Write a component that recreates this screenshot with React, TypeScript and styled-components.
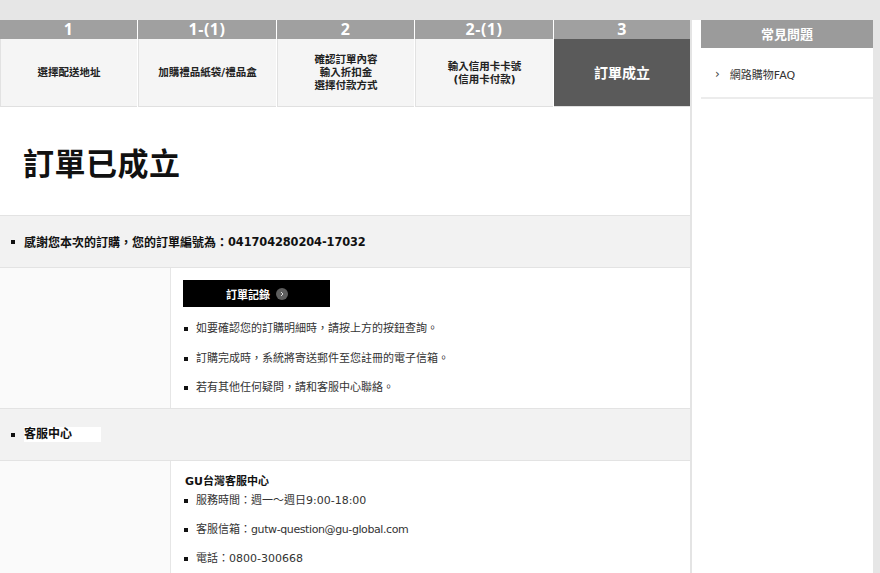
import React from "react";
import styled, { createGlobalStyle } from "styled-components";

const GlobalStyle = createGlobalStyle`
    html, body {
        margin: 0;
        padding: 0;
        background: #e6e6e6;
    }
    body {
        font-family: "DejaVu Sans", "Noto Sans CJK TC", sans-serif;
        color: #333;
        font-size: 11px;
    }
    * {
        box-sizing: border-box;
    }
`;

const steps = [
    { no: "1", label: ["選擇配送地址"] },
    { no: "1-(1)", label: ["加購禮品紙袋/禮品盒"] },
    { no: "2", label: ["確認訂單內容", "輸入折扣金", "選擇付款方式"] },
    { no: "2-(1)", label: ["輸入信用卡卡號", "(信用卡付款)"] },
    { no: "3", label: ["訂單成立"], active: true },
];

const Page = styled.div`
    width: 880px;
    height: 573px;
    padding: 20px 7px 0 0;
    overflow: hidden;
`;

const Sheet = styled.div`
    display: flex;
    width: 873px;
    min-height: 553px;
    background: #fff;
`;

const Main = styled.main`
    width: 692px;
    border-right: 2px solid #e4e4e4;
    flex-shrink: 0;
`;

const StepBar = styled.ol`
    display: grid;
    grid-template-columns: 137px 139px 138px 139px 137px;
    margin: 0;
    padding: 0;
    list-style: none;
`;

const Step = styled.li`
    display: flex;
    flex-direction: column;
    & + & {
        border-left: 1px solid #fff;
    }
`;

const StepNo = styled.div`
    height: 19px;
    line-height: 19px;
    background: #a0a0a0;
    color: #fff;
    text-align: center;
    font-family: "Open Sans", "Noto Sans CJK TC", sans-serif;
    font-weight: 700;
    font-size: 16px;
    letter-spacing: 0.5px;
`;

const StepLabel = styled.div<{ $active?: boolean }>`
    height: 68px;
    display: flex;
    flex-direction: column;
    align-items: center;
    justify-content: center;
    background: ${(p) => (p.$active ? "#5a5a5a" : "#f5f5f5")};
    color: ${(p) => (p.$active ? "#fff" : "#222")};
    font-size: ${(p) => (p.$active ? "14px" : "10.5px")};
    font-weight: 700;
    line-height: ${(p) => (p.$active ? "20px" : "13px")};
    border-bottom: 1px solid #e0e0e0;
    border-left: ${(p) => (p.$active ? "none" : "1px solid #e2e2e2")};

    span {
        display: block;
        text-align: left;
    }
`;

const Title = styled.h1`
    margin: 0;
    height: 108px;
    display: flex;
    align-items: center;
    padding: 0 0 0 23px;
    font-family: "Noto Sans CJK TC", sans-serif;
    font-size: 31px;
    font-weight: 700;
    color: #111;
    letter-spacing: 0.5px;
`;

const Band = styled.div`
    height: 53px;
    display: flex;
    align-items: center;
    padding-left: 11px;
    background: #f2f2f2;
    border-top: 1px solid #e3e3e3;
    border-bottom: 1px solid #e3e3e3;
    font-size: 12px;
    font-weight: 700;
    color: #111;

    &::before {
        content: "";
        width: 4px;
        height: 4px;
        margin-right: 9px;
        background: #111;
    }
`;

const OrderNo = styled.span`
    font-size: 11.4px;
    letter-spacing: -0.1px;
`;

const Highlight = styled.span`
    display: inline-block;
    width: 77px;
    line-height: 15px;
    background: #fff;
`;

const Row = styled.div`
    display: grid;
    grid-template-columns: 171px 1fr;
`;

const Aside = styled.div`
    background: #fafafa;
    border-right: 1px solid #e6e6e6;
`;

const Cell = styled.div<{ $top: number }>`
    padding: ${(p) => p.$top}px 12px 11px 12px;
`;

const RecordButton = styled.button`
    display: flex;
    align-items: center;
    justify-content: center;
    gap: 6px;
    width: 147px;
    height: 27px;
    border: 0;
    background: #000;
    color: #fff;
    font-family: "Noto Sans CJK TC", sans-serif;
    font-size: 11px;
    font-weight: 700;
    cursor: pointer;
    padding: 0 0 0 1px;
`;

const CircleArrow = styled.span`
    display: flex;
    align-items: center;
    justify-content: center;
    width: 12px;
    height: 12px;
    border-radius: 50%;
    background: #5e5e5e;
`;

const Notes = styled.ul<{ $gap: number; $first: number }>`
    margin: ${(p) => p.$first}px 0 0;
    padding: 0;
    list-style: none;
    display: flex;
    flex-direction: column;
    gap: ${(p) => p.$gap}px;
`;

const Note = styled.li`
    display: flex;
    align-items: center;
    line-height: 18px;
    font-size: 11px;
    color: #333;

    &::before {
        content: "";
        width: 4px;
        height: 4px;
        margin: 0 8px 0 1px;
        background: #111;
        flex-shrink: 0;
    }
`;

const Mail = styled.span`
    letter-spacing: -0.4px;
`;

const CenterName = styled.div`
    line-height: 18px;
    font-size: 11px;
    font-weight: 700;
    color: #111;
    margin-left: 2px;
`;

const Sidebar = styled.aside`
    width: 172px;
    margin-left: 9px;
`;

const SideHead = styled.div`
    height: 28px;
    line-height: 28px;
    background: #9b9b9b;
    color: #fff;
    text-align: center;
    font-family: "Noto Sans CJK TC", sans-serif;
    font-size: 13px;
    font-weight: 700;
`;

const SideLink = styled.a`
    display: flex;
    align-items: center;
    height: 51px;
    padding: 3px 0 0 14px;
    border-bottom: 2px solid #ececec;
    color: #333;
    text-decoration: none;
    font-size: 11px;

    &::before {
        content: "›";
        margin-right: 10px;
        font-size: 12px;
        color: #444;
    }
`;

export default function App() {
    return (
        <Page>
            <GlobalStyle />
            <Sheet>
                <Main>
                    <StepBar>
                        {steps.map((s) => (
                            <Step key={s.no}>
                                <StepNo>{s.no}</StepNo>
                                <StepLabel $active={s.active}>
                                    {s.label.map((l) => (
                                        <span key={l}>{l}</span>
                                    ))}
                                </StepLabel>
                            </Step>
                        ))}
                    </StepBar>

                    <Title>訂單已成立</Title>

                    <Band>
                        感謝您本次的訂購，您的訂單編號為：<OrderNo>041704280204-17032</OrderNo>
                    </Band>
                    <Row>
                        <Aside />
                        <Cell $top={12}>
                            <RecordButton>
                                訂單記錄
                                <CircleArrow>
                                    <svg width="6" height="6" viewBox="0 0 6 6">
                                        <path d="M2 1l2 2-2 2" fill="none" stroke="#ddd" strokeWidth="1" />
                                    </svg>
                                </CircleArrow>
                            </RecordButton>
                            <Notes $gap={11.5} $first={13}>
                                <Note>如要確認您的訂購明細時，請按上方的按鈕查詢。</Note>
                                <Note>訂購完成時，系統將寄送郵件至您註冊的電子信箱。</Note>
                                <Note>若有其他任何疑問，請和客服中心聯絡。</Note>
                            </Notes>
                        </Cell>
                    </Row>

                    <Band>
                        <Highlight>客服中心</Highlight>
                    </Band>
                    <Row>
                        <Aside />
                        <Cell $top={12}>
                            <CenterName>GU台灣客服中心</CenterName>
                            <Notes $gap={11} $first={1}>
                                <Note>服務時間：週一～週日9:00-18:00</Note>
                                <Note>
                                    客服信箱：<Mail>gutw-question@gu-global.com</Mail>
                                </Note>
                                <Note>電話：0800-300668</Note>
                            </Notes>
                        </Cell>
                    </Row>
                </Main>

                <Sidebar>
                    <SideHead>常見問題</SideHead>
                    <SideLink href="#">網路購物FAQ</SideLink>
                </Sidebar>
            </Sheet>
        </Page>
    );
}
